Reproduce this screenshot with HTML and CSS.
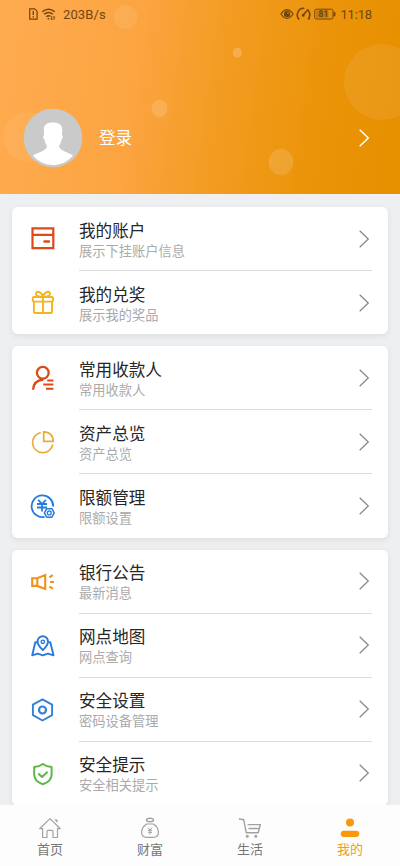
FILE: index.html
```html
<!DOCTYPE html>
<html lang="zh-CN">
<head>
<meta charset="utf-8">
<meta name="viewport" content="width=device-width, initial-scale=1">
<title>我的</title>
<link rel="stylesheet" href="styles.css">
</head>
<body>
<svg class="defs" width="0" height="0">
  <symbol id="chev" viewBox="0 0 12 20"><path d="M1.700 1.700 10.300 10 1.700 18.300"/></symbol>
</svg>
<div class="app">
  <header class="hero">
    <svg class="bubbles" viewBox="0 0 400 194" fill="#fff">
      <circle cx="125.500" cy="17" r="12" opacity=".09"/>
      <ellipse cx="237.300" cy="52.700" rx="4.500" ry="5" opacity=".2"/>
      <circle cx="382" cy="82" r="38" opacity=".08"/>
      <ellipse cx="159.500" cy="108.500" rx="8" ry="8.700" opacity=".15"/>
      <ellipse cx="281" cy="162" rx="12.300" ry="13.200" opacity=".14"/>
      <circle cx="28" cy="137" r="25" opacity=".06"/>
    </svg>
    <div class="status">
      <div class="status-side">
        <svg width="29" height="14" viewBox="0 0 29 14" fill="none" stroke="currentColor" stroke-width="1.200">
          <path d="M1.700 1.800H6.700L9.100 4.200V12.200H1.700Z"/><path d="M5.300 4v4M5.300 9.200v1.400" stroke-width="1.400"/>
          <path d="M14.200 4.800Q20.500-.4 26.800 4.800M16 7.300Q20.500 3.600 25 7.300M18.200 9.700Q20.500 8 22.500 9.300" stroke-width="1.400"/>
          <circle cx="20.400" cy="11.700" r=".9" fill="currentColor" stroke="none"/><path d="M23.600 9v4M22.500 11.700l1.100 1.300 1-1.300M26 13V9.500M25 10.700l1-1.300 1 1.300" stroke-width=".8"/>
        </svg>
        <span class="speed">203B/s</span>
      </div>
      <div class="status-side">
        <svg width="57" height="14" viewBox="0 0 57 14" fill="none" stroke="currentColor" stroke-width="1.200">
          <path d="M.9 7Q7-1.800 13.100 7 7 15.800.9 7Z"/><circle cx="7" cy="7" r="2.600" fill="currentColor"/><circle cx="8" cy="6" r=".8" fill="#e99a20" stroke="none"/>
          <path d="M19.200 12.300A6.400 6.400 0 0 1 24.300 1.400M27.300 2.400Q31.800 6.500 28.300 12.300M17.500 11l1.700 1.300M28.300 12.300l1.500-1M22.700 8.400 27.700 3" stroke-width="1.500"/><circle cx="23.200" cy="8.400" r="1.400" fill="currentColor" stroke="none"/>
          <rect x="34.700" y="2.200" width="18.300" height="9.800" rx="1.600" stroke-width="1"/><rect x="36" y="3.500" width="12.500" height="7.200" fill="currentColor" opacity=".32" stroke="none"/>
          <path d="M54.500 5.200v4" stroke-width="1.800"/>
          <text x="38.600" y="10.200" class="battery">81</text>
        </svg>
        <span class="time">11:18</span>
      </div>
    </div>
    <a class="login">
      <svg class="avatar" width="60" height="60" viewBox="0 0 60 60">
        <circle cx="30" cy="30" r="29.300" fill="#cacaca"/>
        <path fill="#fff" d="M30 14.600C35 14.600 39.300 16.500 39.200 21.500L39 27C40.200 27 40 31 38.500 32 38 35 36.500 37 36 38 36.500 43 45 44 50 47.500 44 54.500 37 57 30 57S15.500 54 9.800 47.500C16 44 23.500 43 24 38 23 36.500 22 35 21.700 32 20 31 19.800 27.500 21 27L20.900 21C20.800 16.500 25 14.600 30 14.600Z"/>
      </svg>
      <span class="login-text">登录</span>
      <svg class="chev"><use href="#chev"/></svg>
    </a>
  </header>
  <main class="list">
    <section class="card">
      <a class="row">
        <svg class="icon red" viewBox="0 0 28 28"><path d="M3.500 3.400H24.300V23.200H3.500ZM3.500 9.800H24.300" stroke-width="2.200"/><path d="M15.500 16.500H20" stroke-width="2.400" stroke-linecap="round"/></svg>
        <div class="body"><div class="text"><h2>我的账户</h2><p>展示下挂账户信息</p></div><svg class="chev"><use href="#chev"/></svg></div>
      </a>
      <a class="row">
        <svg class="icon yellow" viewBox="0 0 28 28"><rect x="3.800" y="8" width="20.200" height="4.600" rx="1"/><path d="M4.900 12.600V23q0 1 1 1H22q1 0 1-1V12.600M14 8V24M14 8C9.500 8 5.800 6.300 7.300 3.800 9 1.500 13 3.500 14 8 15 3.500 19 1.500 20.700 3.800 22.200 6.300 18.500 8 14 8" stroke-width="1.900"/></svg>
        <div class="body"><div class="text"><h2>我的兑奖</h2><p>展示我的奖品</p></div><svg class="chev"><use href="#chev"/></svg></div>
      </a>
    </section>
    <section class="card">
      <a class="row">
        <svg class="icon red" viewBox="0 0 28 28"><g stroke-width="2.300"><circle cx="13.800" cy="8.800" r="5.900"/><path d="M4.100 25.700C4.200 20 7.800 16.300 14.300 15.500"/><path d="M18.200 16.500H24.400M14.300 20.600H24.400M17 24.700H24.400" stroke-width="2"/></g></svg>
        <div class="body"><div class="text"><h2>常用收款人</h2><p>常用收款人</p></div><svg class="chev"><use href="#chev"/></svg></div>
      </a>
      <a class="row">
        <svg class="icon amber" viewBox="0 0 28 28"><g stroke-width="1.700"><path d="M11.800 4.500A10.200 10.200 0 1 0 23.800 16.400"/><path d="M14.700 3.800V13.300H24.200C24.200 7.500 20.500 3.800 14.700 3.800Z"/></g></svg>
        <div class="body"><div class="text"><h2>资产总览</h2><p>资产总览</p></div><svg class="chev"><use href="#chev"/></svg></div>
      </a>
      <a class="row">
        <svg class="icon blue" viewBox="0 0 28 28"><g stroke-width="1.800"><path d="M15.600 24.800A10.800 10.800 0 1 1 24.200 14.500"/><path d="M9.200 7.800 13 12 16.900 7.800M8 12H18M8 15.500H18M13 12V19.500"/><path d="M17.700 16.700H22.900L25.200 20.900 22.900 25.200H17.700L15.400 20.900Z" stroke-width="1.500" stroke-linejoin="round"/><circle cx="20.300" cy="20.900" r="1.900" stroke-width="1.300"/></g></svg>
        <div class="body"><div class="text"><h2>限额管理</h2><p>限额设置</p></div><svg class="chev"><use href="#chev"/></svg></div>
      </a>
    </section>
    <section class="card">
      <a class="row">
        <svg class="icon orange" viewBox="0 0 28 28"><path d="M3.200 10.200H8.300L16.200 7V21L8.300 17.900H3.200ZM8.300 10.200V17.900M20.300 9.300 23.900 7.200M21 14H25M20.300 18.600 23.900 20.700" stroke-width="2.100"/></svg>
        <div class="body"><div class="text"><h2>银行公告</h2><p>最新消息</p></div><svg class="chev"><use href="#chev"/></svg></div>
      </a>
      <a class="row">
        <svg class="icon blue" viewBox="0 0 28 28"><g stroke-width="1.900" stroke-linejoin="round"><path d="M8.200 10.300H6.300L3.200 23.300 8.700 21.600 13.800 23.300 19 21.600 24.500 23.300 21.300 10.300H19.400"/><path d="M13.800 18.200C10.700 15 8.600 12.500 8.600 9.400A5.200 5.200 0 0 1 19 9.400C19 12.500 17 15 13.800 18.200Z"/><circle cx="13.800" cy="9.800" r="1.700" stroke-width="1.400"/></g></svg>
        <div class="body"><div class="text"><h2>网点地图</h2><p>网点查询</p></div><svg class="chev"><use href="#chev"/></svg></div>
      </a>
      <a class="row">
        <svg class="icon blue2" viewBox="0 0 28 28"><g stroke-width="1.900" stroke-linejoin="round"><path d="M13.500 3.400 23.100 8.700V19.100L13.500 24.500 3.900 19.100V8.700Z"/><circle cx="13.500" cy="14" r="3.500" stroke-width="2.200"/></g></svg>
        <div class="body"><div class="text"><h2>安全设置</h2><p>密码设备管理</p></div><svg class="chev"><use href="#chev"/></svg></div>
      </a>
      <a class="row">
        <svg class="icon green" viewBox="0 0 28 28"><path d="M13.900 4C16.500 6 19 6.700 22.600 6.900V14.500C22.600 19.500 18.500 22.700 13.900 24.300 9.300 22.700 5.200 19.500 5.200 14.500V6.900C8.800 6.700 11.300 6 13.900 4ZM9.300 13.600 13 17 18.600 11.800" stroke-width="2" stroke-linejoin="round"/></svg>
        <div class="body"><div class="text"><h2>安全提示</h2><p>安全相关提示</p></div><svg class="chev"><use href="#chev"/></svg></div>
      </a>
    </section>
  </main>
  <nav class="tabs">
    <a class="tab"><svg viewBox="0 0 24 24"><path d="M1.700 12.700 12 2.600 22.300 12.700H19.500V21.500H15V15.300Q15 14.300 14 14.300H10Q9 14.300 9 15.300V21.500H4.600V12.700Z" stroke-linejoin="round"/><path d="M16.200 3.600H19.500V7Z" fill="currentColor" stroke="none"/></svg><span>首页</span></a>
    <a class="tab"><svg viewBox="0 0 24 24"><ellipse cx="12" cy="4" rx="3.500" ry="1.800" stroke-width="1.400"/><path d="M8.600 8H15.400C18.500 10 20.400 13 20.400 16.300 20.400 19.500 18.500 21.300 15.500 21.300H8.500C5.500 21.300 3.600 19.500 3.600 16.300 3.600 13 5.500 10 8.600 8Z"/><path d="M10 11.600 12 14.200 14 11.600M10 14.300H14M10 16.300H14M12 14.200V18.500" stroke-width="1"/></svg><span>财富</span></a>
    <a class="tab"><svg viewBox="0 0 24 24"><path d="M1 3 5.700 3.800 8.300 16.700H20.200L22.300 8.600H9.600M10.500 12.500H20.700M1 3l5.300 .8" stroke-width="1.400"/><circle cx="9.300" cy="20.300" r="1.500" fill="currentColor" stroke="none"/><circle cx="17.800" cy="20.300" r="1.500" fill="currentColor" stroke="none"/></svg><span>生活</span></a>
    <a class="tab active"><svg viewBox="0 0 24 24"><circle cx="12" cy="6.500" r="4" fill="currentColor" stroke="none"/><rect x="2.700" y="14.700" width="18.600" height="6.200" rx="3.100" fill="currentColor" stroke="none"/></svg><span>我的</span></a>
  </nav>
</div>
</body>
</html>
```
FILE: styles.css
```css
* { box-sizing: border-box; margin: 0; padding: 0; }
body { font-family: Roboto, "Noto Sans CJK SC", sans-serif; background: #eeeff1; }
.defs { display: block; }
.app { width: 400px; height: 866px; display: flex; flex-direction: column; overflow: hidden; }
.hero {
  position: relative; flex: none; height: 194px;
  background: linear-gradient(98deg, #ffab50 0%, #fba440 35%, #f39c23 54%, #ec950c 75%, #e79000 95%);
}
.bubbles { position: absolute; inset: 0; width: 400px; height: 194px; }
.status {
  position: relative; display: flex; justify-content: space-between;
  height: 28px; padding: 0 28px 0 28px; color: #71450f;
}
.status-side { display: flex; align-items: center; }
.speed { margin-left: 6px; font-size: 13px; letter-spacing: .1px; }
.time { margin-left: 3px; font-size: 13px; letter-spacing: -.15px; }
.battery { font: bold 8.500px Roboto, sans-serif; fill: currentColor; stroke: none; }
.login { position: relative; display: flex; align-items: center; height: 60px; margin-top: 80px; padding: 0 30.500px 0 23px; color: #fff; }
.avatar { flex: none; }
.login-text { flex: 1; margin-left: 16px; padding-top: 2px; font-size: 16.500px; line-height: 24px; }
.chev { flex: none; width: 12px; height: 20px; fill: none; stroke: #858585; stroke-width: 1.200; }
.login .chev { stroke: #fff; stroke-width: 1.500; }
.list { flex: 1; min-height: 0; overflow: hidden; padding: 13px 12px 0; display: flex; flex-direction: column; gap: 12px; }
.card { flex: none; background: #fff; border-radius: 6px; box-shadow: 0 2px 6px rgba(0, 0, 0, .07); }
.card:first-child { height: 127px; }
.card:nth-child(2) { height: 191.500px; }
.row { display: flex; align-items: center; height: 64px; padding: 0 16px 0 17px; }
.icon { flex: none; width: 28px; height: 28px; fill: none; stroke: currentColor; stroke-width: 1.900; }
.body { flex: 1; display: flex; align-items: center; justify-content: space-between; height: 64px; margin-left: 22px; padding-right: 2px; border-bottom: 1px solid #dcdcdc; }
.row:last-child .body { border-bottom-color: transparent; }
.text { padding-top: 4px; }
.text h2 { font-size: 16.600px; font-weight: 400; line-height: 22px; color: #262626; }
.text p { font-size: 13.250px; line-height: 18px; color: #aaa; }
.red { color: #dd4a16; }
.yellow { color: #f5b41b; }
.amber { color: #eba936; }
.blue { color: #277bdd; }
.blue2 { color: #3380d8; }
.orange { color: #f2921d; }
.green { color: #5cb747; }
.tabs { flex: none; display: flex; height: 61px; background: #fdfdfd; }
.tab { flex: 1; display: flex; flex-direction: column; align-items: center; padding-top: 11px; color: #777; font-size: 13px; line-height: 18px; }
.tab svg { width: 24px; height: 24px; fill: none; stroke: currentColor; stroke-width: 1.200; color: #a2a2a2; }
.tab span { padding-top: 1px; }
.tab.active { color: #f59a23; }
.tab.active svg { color: #fb970b; }
```
